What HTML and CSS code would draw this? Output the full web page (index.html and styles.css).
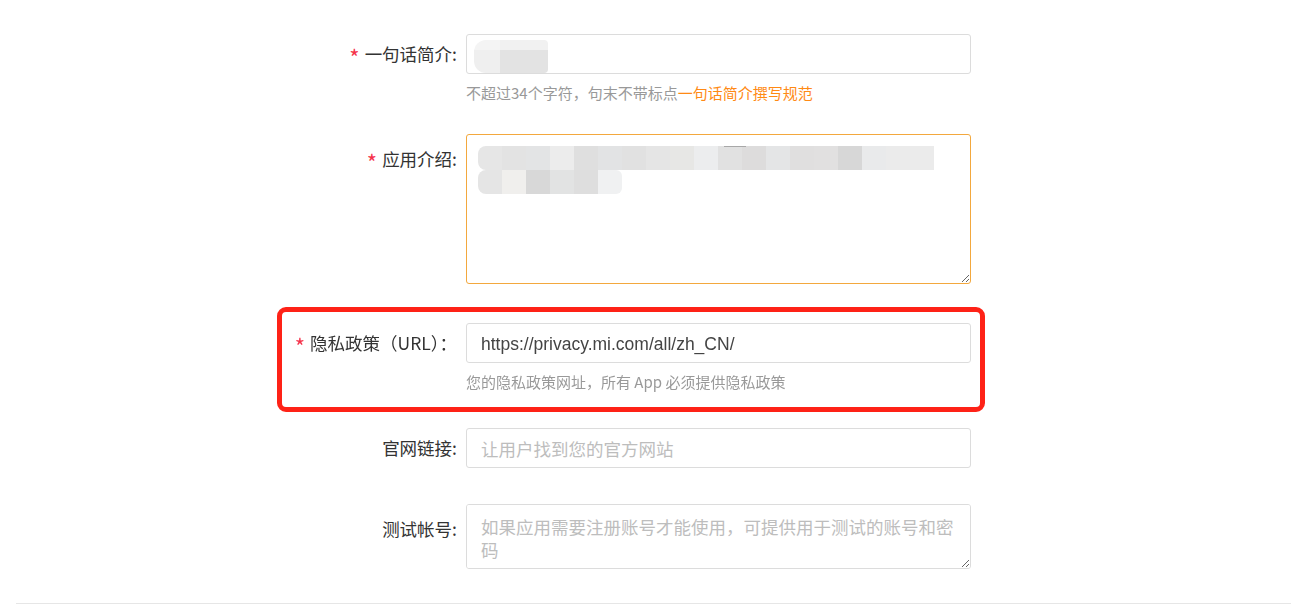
FILE: index.html
```html
<!DOCTYPE html>
<html>
<head>
 <meta charset="utf-8">
 <title>应用信息</title>
 <link rel="stylesheet" href="styles.css">
</head>
<body>
<div class="page">
 <div class="form">

  <div class="row row_intro">
   <div class="label"><span class="star">*</span>一句话简介:</div>
   <div class="control">
    <div class="field">
     <input class="input" type="text" value="">
     <div class="mosaic_short">
      <i style="background:#f4f4f4"></i><i style="background:#f1f1f1"></i>
      <i style="background:#efefef"></i><i style="background:#e3e3e3"></i>
     </div>
    </div>
    <div class="hint">不超过34个字符，句末不带标点<a class="hint_link" href="#">一句话简介撰写规范</a></div>
   </div>
  </div>

  <div class="row row_desc">
   <div class="label label_tall"><span class="star">*</span>应用介绍:</div>
   <div class="control">
    <div class="field">
     <textarea class="textarea textarea_focus"></textarea>
     <div class="mosaic_long">
      <div class="mosaic_line">
       <i class="first" style="background:#e6e6e6"></i><i style="background:#e3e3e3"></i><i style="background:#e3e4e5"></i><i style="background:#ececec"></i><i style="background:#dfdfdf"></i><i style="background:#e2e3e4"></i><i style="background:#e1e1e1"></i><i style="background:#e5e5e5"></i><i style="background:#e7e7e5"></i><i style="background:#ecedee"></i><i style="background:#e1e1e1"></i><i style="background:#dddcdc"></i><i style="background:#e4e5e6"></i><i style="background:#e0dfdf"></i><i style="background:#e1e0e0"></i><i style="background:#d7d7d7"></i><i style="background:#e9eaeb"></i><i style="background:#ebebeb"></i><i style="background:#ebebeb"></i>
      </div>
      <div class="mosaic_line">
       <i class="first" style="background:#e5e5e5"></i><i style="background:#f0efed"></i><i style="background:#d8d8d8"></i><i style="background:#e2e3e3"></i><i style="background:#dedede"></i><i class="last" style="background:#f0f1f2"></i>
      </div>
      <span class="mosaic_tick"></span>
     </div>
    </div>
   </div>
  </div>

  <div class="row row_privacy">
   <div class="label"><span class="star">*</span>隐私政策（URL）：</div>
   <div class="control">
    <input class="input input_latin" type="text" value="https://privacy.mi.com/all/zh_CN/">
    <div class="hint">您的隐私政策网址，所有 App 必须提供隐私政策</div>
   </div>
  </div>

  <div class="row row_site">
   <div class="label">官网链接:</div>
   <div class="control">
    <input class="input" type="text" placeholder="让用户找到您的官方网站">
   </div>
  </div>

  <div class="row row_test">
   <div class="label label_tall">测试帐号:</div>
   <div class="control">
    <textarea class="textarea textarea_small" placeholder="如果应用需要注册账号才能使用，可提供用于测试的账号和密码"></textarea>
   </div>
  </div>

 </div>
 <div class="divider"></div>
</div>
</body>
</html>
```

FILE: styles.css
```css
html, body {
	margin: 0;
	padding: 0;
	background: #FFFFFF;
}

.page {
	font-family: "Noto Sans CJK SC", "Noto Sans", sans-serif;
	font-size: 17.5px;
	color: #333333;
	padding-top: 34px;
}

.form {
	margin-left: 260px;
	width: 711px;
}

.row {
	display: flex;
	gap: 6px;
}

.row_intro { margin-bottom: 31px; }
.row_desc { margin-bottom: 39px; }
.row_privacy { margin-bottom: 36px; position: relative; }
.row_site { margin-bottom: 36px; }
.row_test { margin-bottom: 34px; }

/* red annotation frame round the privacy row */
.row_privacy::after {
	content: "";
	position: absolute;
	top: -16px;
	bottom: -20px;
	left: 17px;
	right: -14px;
	border: 5px solid #FE2217;
	border-radius: 9px;
	pointer-events: none;
}

.label {
	width: 197px;
	padding-right: 3px;
	flex: none;
	text-align: right;
	line-height: 40px;
	height: 40px;
	white-space: nowrap;
}

.label_tall {
	padding-top: 5px;
}

.star {
	color: #F5334B;
	font-size: 22px;
	line-height: 20px;
	margin-right: 5px;
	display: inline-block;
	vertical-align: -5px;
}

.control {
	width: 505px;
	flex: none;
}

.field {
	position: relative;
}

.input {
	display: block;
	box-sizing: border-box;
	width: 505px;
	height: 40px;
	padding: 0 14px;
	border: 1px solid #DCDCDC;
	border-radius: 3px;
	font-family: "Noto Sans CJK SC", "Noto Sans", sans-serif;
	font-size: 17.5px;
	color: #444444;
	outline: none;
	background: #FFFFFF;
}

.input_latin {
	font-family: "Liberation Sans", "Noto Sans CJK SC", sans-serif;
	padding-top: 3px;
}

.input::placeholder,
.textarea::placeholder {
	color: #BDBDBD;
}

.textarea {
	display: block;
	box-sizing: border-box;
	width: 505px;
	padding: 10px 14px;
	border: 1px solid #DCDCDC;
	border-radius: 3px;
	font-family: "Noto Sans CJK SC", "Noto Sans", sans-serif;
	font-size: 17.5px;
	line-height: 23px;
	color: #444444;
	outline: none;
	resize: vertical;
	background: #FFFFFF;
}

.textarea_focus {
	height: 150px;
	border-color: #F3A83E;
}

.textarea_small {
	height: 65px;
}

.hint {
	font-size: 15px;
	line-height: 20px;
	color: #999999;
	padding-top: 9px;
	white-space: nowrap;
}

.hint_link {
	color: #FF8A14;
	text-decoration: none;
}

/* blurred-out content */
.mosaic_short {
	position: absolute;
	left: 8px;
	top: 6px;
	display: grid;
	grid-template-columns: 26px 48px;
	grid-template-rows: 10px 23px;
	border-radius: 12px 4px 4px 12px;
	overflow: hidden;
}

.mosaic_short i {
	display: block;
}

.mosaic_long {
	position: absolute;
	left: 12px;
	top: 12px;
}

.mosaic_line {
	display: flex;
	height: 24px;
}

.mosaic_line i {
	display: block;
	width: 24px;
	height: 24px;
}

.mosaic_line i.first {
	border-radius: 8px 0 0 8px;
}

.mosaic_line i.last {
	border-radius: 0 6px 6px 0;
}

.mosaic_tick {
	position: absolute;
	left: 246px;
	top: 0;
	width: 22px;
	height: 1px;
	background: #A8A8A8;
}

.divider {
	margin-left: 16px;
	height: 0;
	border-top: 1px solid #E6E6E6;
}
```
